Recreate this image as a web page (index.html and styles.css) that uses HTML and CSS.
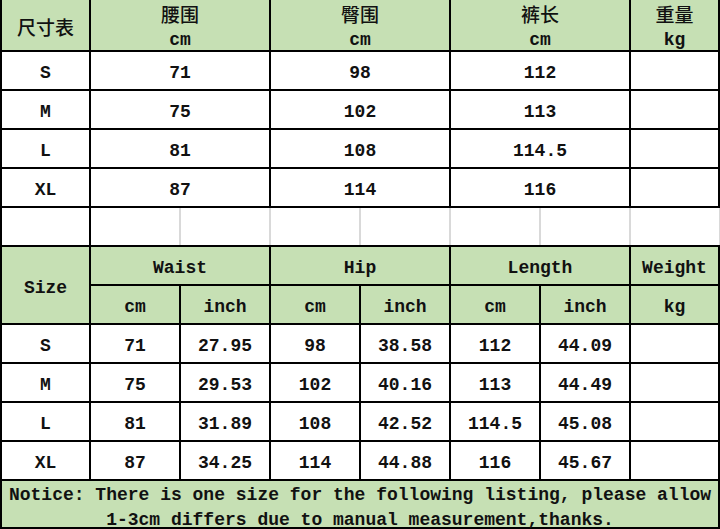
FILE: index.html
```html
<!DOCTYPE html>
<html lang="zh">
<head>
<meta charset="utf-8">
<title>尺寸表</title>
<link rel="stylesheet" href="styles.css">
</head>
<body>
<div class="chart">
  <div class="c head title">尺寸表</div>
  <div class="c head s2 two"><span class="zh">腰围</span><span>cm</span></div>
  <div class="c head s2 two"><span class="zh">臀围</span><span>cm</span></div>
  <div class="c head s2 two"><span class="zh">裤长</span><span>cm</span></div>
  <div class="c head two"><span class="zh">重量</span><span>kg</span></div>

  <div class="c">S</div><div class="c s2">71</div><div class="c s2">98</div><div class="c s2">112</div><div class="c"></div>
  <div class="c">M</div><div class="c s2">75</div><div class="c s2">102</div><div class="c s2">113</div><div class="c"></div>
  <div class="c">L</div><div class="c s2">81</div><div class="c s2">108</div><div class="c s2">114.5</div><div class="c"></div>
  <div class="c">XL</div><div class="c s2">87</div><div class="c s2">114</div><div class="c s2">116</div><div class="c"></div>

  <div class="c"></div><div class="c blank"></div>

  <div class="c head r2">Size</div>
  <div class="c head s2">Waist</div>
  <div class="c head s2">Hip</div>
  <div class="c head s2">Length</div>
  <div class="c head">Weight</div>
  <div class="c head">cm</div><div class="c head">inch</div>
  <div class="c head">cm</div><div class="c head">inch</div>
  <div class="c head">cm</div><div class="c head">inch</div>
  <div class="c head">kg</div>

  <div class="c">S</div><div class="c">71</div><div class="c">27.95</div><div class="c">98</div><div class="c">38.58</div><div class="c">112</div><div class="c">44.09</div><div class="c"></div>
  <div class="c">M</div><div class="c">75</div><div class="c">29.53</div><div class="c">102</div><div class="c">40.16</div><div class="c">113</div><div class="c">44.49</div><div class="c"></div>
  <div class="c">L</div><div class="c">81</div><div class="c">31.89</div><div class="c">108</div><div class="c">42.52</div><div class="c">114.5</div><div class="c">45.08</div><div class="c"></div>
  <div class="c">XL</div><div class="c">87</div><div class="c">34.25</div><div class="c">114</div><div class="c">44.88</div><div class="c">116</div><div class="c">45.67</div><div class="c"></div>

  <div class="c head notice">Notice: There is one size for the following listing, please allow<br>1-3cm differs due to manual measurement,thanks.</div>
</div>
</body>
</html>
```
FILE: styles.css
```css
html, body {
  margin: 0;
  padding: 0;
  background: #ffffff;
}

body {
  font-family: "Liberation Mono", "Noto Sans CJK SC", monospace;
  font-weight: 700;
  font-size: 18px;
  color: #111111;
}

.chart {
  width: 720px;
  height: 529px;
  box-sizing: border-box;
  display: grid;
  grid-template-columns: 87px repeat(6, 88px) 87px;
  grid-template-rows: 50px repeat(11, 37px) 46px;
  gap: 2px;
  padding: 0 2px 2px 2px;
  background: #000000;
}

.c {
  background: #ffffff;
  display: flex;
  align-items: center;
  justify-content: center;
  text-align: center;
  line-height: 24px;
  white-space: nowrap;
  padding-top: 5px;
  box-sizing: border-box;
}

.head {
  background: #c6e0b4;
}

.s2 {
  grid-column: span 2;
}

.r2 {
  grid-row: span 2;
}

.two {
  flex-direction: column;
  line-height: 26px;
  padding-top: 4px;
}

.zh {
  font-family: "Noto Sans CJK SC", sans-serif;
  font-weight: 500;
  font-size: 19px;
}

.title {
  font-family: "Noto Sans CJK SC", sans-serif;
  font-weight: 500;
  font-size: 19px;
  padding-top: 4px;
}

.blank {
  grid-column: 2 / 9;
  margin-right: -2px;
  background: #ffffff repeating-linear-gradient(to right, transparent 0 88px, #d9d9d9 88px 90px);
}

.notice {
  grid-column: 1 / -1;
  line-height: 25px;
  padding-top: 7px;
}
```
